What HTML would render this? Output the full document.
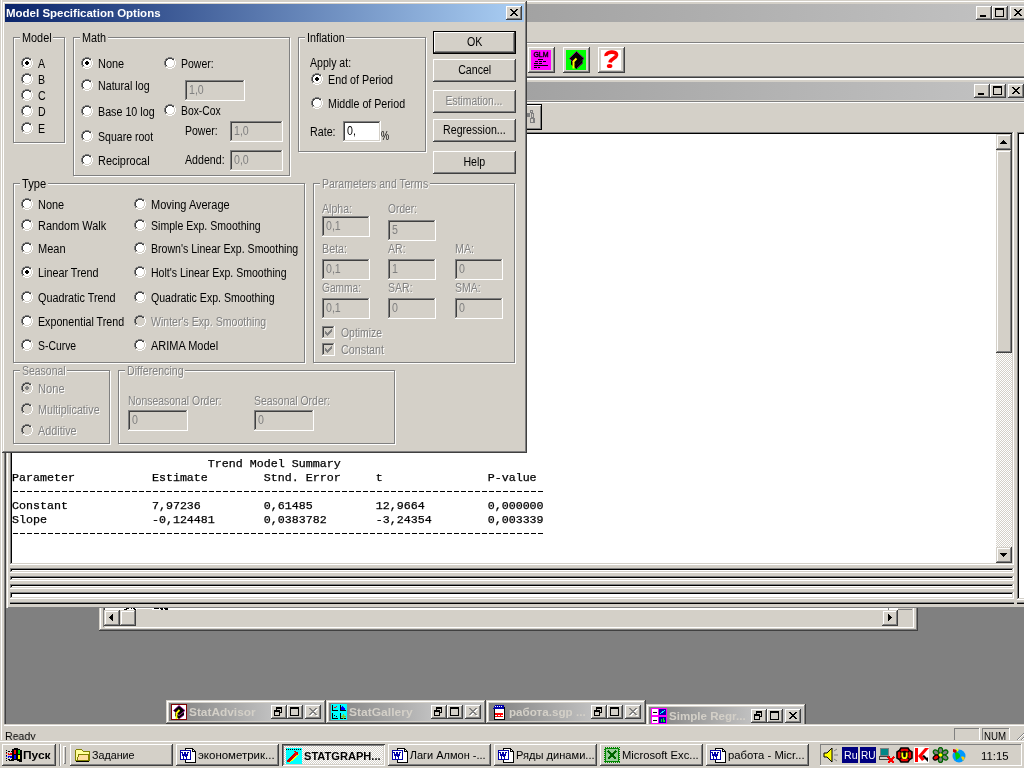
<!DOCTYPE html>
<html><head><meta charset="utf-8"><title>Model Specification Options</title>
<style>
html,body{margin:0;padding:0}
body{width:1024px;height:768px;overflow:hidden;background:#d4d0c8;position:relative;font-family:"Liberation Sans",sans-serif;font-size:12px}
div,span.t,svg.i{position:absolute;box-sizing:border-box}
span.t{white-space:pre;transform-origin:0 50%}
svg.i{shape-rendering:crispEdges;overflow:hidden}
.bl{text-align:center;font-size:12px;white-space:pre}
.m{font-family:"Liberation Mono",monospace;font-size:11.667px;line-height:14px;white-space:pre;color:#000;-webkit-text-stroke:.25px #000}
</style></head><body>
<svg width="0" height="0" style="position:absolute"><defs>
<symbol id="ru"><rect x="4" y="0" width="4" height="1" fill="#808080"/><rect x="2" y="1" width="2" height="1" fill="#808080"/><rect x="4" y="1" width="4" height="1" fill="#404040"/><rect x="8" y="1" width="2" height="1" fill="#808080"/><rect x="1" y="2" width="1" height="1" fill="#808080"/><rect x="2" y="2" width="2" height="1" fill="#404040"/><rect x="4" y="2" width="4" height="1" fill="#fff"/><rect x="8" y="2" width="2" height="1" fill="#404040"/><rect x="10" y="2" width="1" height="1" fill="#fff"/><rect x="1" y="3" width="1" height="1" fill="#808080"/><rect x="2" y="3" width="1" height="1" fill="#404040"/><rect x="3" y="3" width="6" height="1" fill="#fff"/><rect x="9" y="3" width="1" height="1" fill="#d4d0c8"/><rect x="10" y="3" width="1" height="1" fill="#fff"/><rect x="0" y="4" width="1" height="1" fill="#808080"/><rect x="1" y="4" width="1" height="1" fill="#404040"/><rect x="2" y="4" width="8" height="1" fill="#fff"/><rect x="10" y="4" width="1" height="1" fill="#d4d0c8"/><rect x="11" y="4" width="1" height="1" fill="#fff"/><rect x="0" y="5" width="1" height="1" fill="#808080"/><rect x="1" y="5" width="1" height="1" fill="#404040"/><rect x="2" y="5" width="8" height="1" fill="#fff"/><rect x="10" y="5" width="1" height="1" fill="#d4d0c8"/><rect x="11" y="5" width="1" height="1" fill="#fff"/><rect x="0" y="6" width="1" height="1" fill="#808080"/><rect x="1" y="6" width="1" height="1" fill="#404040"/><rect x="2" y="6" width="8" height="1" fill="#fff"/><rect x="10" y="6" width="1" height="1" fill="#d4d0c8"/><rect x="11" y="6" width="1" height="1" fill="#fff"/><rect x="0" y="7" width="1" height="1" fill="#808080"/><rect x="1" y="7" width="1" height="1" fill="#404040"/><rect x="2" y="7" width="8" height="1" fill="#fff"/><rect x="10" y="7" width="1" height="1" fill="#d4d0c8"/><rect x="11" y="7" width="1" height="1" fill="#fff"/><rect x="1" y="8" width="1" height="1" fill="#808080"/><rect x="2" y="8" width="1" height="1" fill="#404040"/><rect x="3" y="8" width="6" height="1" fill="#fff"/><rect x="9" y="8" width="1" height="1" fill="#d4d0c8"/><rect x="10" y="8" width="1" height="1" fill="#fff"/><rect x="1" y="9" width="1" height="1" fill="#808080"/><rect x="2" y="9" width="2" height="1" fill="#d4d0c8"/><rect x="4" y="9" width="4" height="1" fill="#fff"/><rect x="8" y="9" width="2" height="1" fill="#d4d0c8"/><rect x="10" y="9" width="1" height="1" fill="#fff"/><rect x="2" y="10" width="2" height="1" fill="#fff"/><rect x="4" y="10" width="4" height="1" fill="#d4d0c8"/><rect x="8" y="10" width="2" height="1" fill="#fff"/><rect x="4" y="11" width="4" height="1" fill="#fff"/></symbol>
<symbol id="rc"><rect x="4" y="0" width="4" height="1" fill="#808080"/><rect x="2" y="1" width="2" height="1" fill="#808080"/><rect x="4" y="1" width="4" height="1" fill="#404040"/><rect x="8" y="1" width="2" height="1" fill="#808080"/><rect x="1" y="2" width="1" height="1" fill="#808080"/><rect x="2" y="2" width="2" height="1" fill="#404040"/><rect x="4" y="2" width="4" height="1" fill="#fff"/><rect x="8" y="2" width="2" height="1" fill="#404040"/><rect x="10" y="2" width="1" height="1" fill="#fff"/><rect x="1" y="3" width="1" height="1" fill="#808080"/><rect x="2" y="3" width="1" height="1" fill="#404040"/><rect x="3" y="3" width="6" height="1" fill="#fff"/><rect x="9" y="3" width="1" height="1" fill="#d4d0c8"/><rect x="10" y="3" width="1" height="1" fill="#fff"/><rect x="0" y="4" width="1" height="1" fill="#808080"/><rect x="1" y="4" width="1" height="1" fill="#404040"/><rect x="2" y="4" width="3" height="1" fill="#fff"/><rect x="5" y="4" width="2" height="1" fill="#000"/><rect x="7" y="4" width="3" height="1" fill="#fff"/><rect x="10" y="4" width="1" height="1" fill="#d4d0c8"/><rect x="11" y="4" width="1" height="1" fill="#fff"/><rect x="0" y="5" width="1" height="1" fill="#808080"/><rect x="1" y="5" width="1" height="1" fill="#404040"/><rect x="2" y="5" width="2" height="1" fill="#fff"/><rect x="4" y="5" width="4" height="1" fill="#000"/><rect x="8" y="5" width="2" height="1" fill="#fff"/><rect x="10" y="5" width="1" height="1" fill="#d4d0c8"/><rect x="11" y="5" width="1" height="1" fill="#fff"/><rect x="0" y="6" width="1" height="1" fill="#808080"/><rect x="1" y="6" width="1" height="1" fill="#404040"/><rect x="2" y="6" width="2" height="1" fill="#fff"/><rect x="4" y="6" width="4" height="1" fill="#000"/><rect x="8" y="6" width="2" height="1" fill="#fff"/><rect x="10" y="6" width="1" height="1" fill="#d4d0c8"/><rect x="11" y="6" width="1" height="1" fill="#fff"/><rect x="0" y="7" width="1" height="1" fill="#808080"/><rect x="1" y="7" width="1" height="1" fill="#404040"/><rect x="2" y="7" width="3" height="1" fill="#fff"/><rect x="5" y="7" width="2" height="1" fill="#000"/><rect x="7" y="7" width="3" height="1" fill="#fff"/><rect x="10" y="7" width="1" height="1" fill="#d4d0c8"/><rect x="11" y="7" width="1" height="1" fill="#fff"/><rect x="1" y="8" width="1" height="1" fill="#808080"/><rect x="2" y="8" width="1" height="1" fill="#404040"/><rect x="3" y="8" width="6" height="1" fill="#fff"/><rect x="9" y="8" width="1" height="1" fill="#d4d0c8"/><rect x="10" y="8" width="1" height="1" fill="#fff"/><rect x="1" y="9" width="1" height="1" fill="#808080"/><rect x="2" y="9" width="2" height="1" fill="#d4d0c8"/><rect x="4" y="9" width="4" height="1" fill="#fff"/><rect x="8" y="9" width="2" height="1" fill="#d4d0c8"/><rect x="10" y="9" width="1" height="1" fill="#fff"/><rect x="2" y="10" width="2" height="1" fill="#fff"/><rect x="4" y="10" width="4" height="1" fill="#d4d0c8"/><rect x="8" y="10" width="2" height="1" fill="#fff"/><rect x="4" y="11" width="4" height="1" fill="#fff"/></symbol>
<symbol id="rud"><rect x="4" y="0" width="4" height="1" fill="#808080"/><rect x="2" y="1" width="2" height="1" fill="#808080"/><rect x="4" y="1" width="4" height="1" fill="#404040"/><rect x="8" y="1" width="2" height="1" fill="#808080"/><rect x="1" y="2" width="1" height="1" fill="#808080"/><rect x="2" y="2" width="2" height="1" fill="#404040"/><rect x="4" y="2" width="4" height="1" fill="#d4d0c8"/><rect x="8" y="2" width="2" height="1" fill="#404040"/><rect x="10" y="2" width="1" height="1" fill="#fff"/><rect x="1" y="3" width="1" height="1" fill="#808080"/><rect x="2" y="3" width="1" height="1" fill="#404040"/><rect x="3" y="3" width="6" height="1" fill="#d4d0c8"/><rect x="9" y="3" width="1" height="1" fill="#d4d0c8"/><rect x="10" y="3" width="1" height="1" fill="#fff"/><rect x="0" y="4" width="1" height="1" fill="#808080"/><rect x="1" y="4" width="1" height="1" fill="#404040"/><rect x="2" y="4" width="8" height="1" fill="#d4d0c8"/><rect x="10" y="4" width="1" height="1" fill="#d4d0c8"/><rect x="11" y="4" width="1" height="1" fill="#fff"/><rect x="0" y="5" width="1" height="1" fill="#808080"/><rect x="1" y="5" width="1" height="1" fill="#404040"/><rect x="2" y="5" width="8" height="1" fill="#d4d0c8"/><rect x="10" y="5" width="1" height="1" fill="#d4d0c8"/><rect x="11" y="5" width="1" height="1" fill="#fff"/><rect x="0" y="6" width="1" height="1" fill="#808080"/><rect x="1" y="6" width="1" height="1" fill="#404040"/><rect x="2" y="6" width="8" height="1" fill="#d4d0c8"/><rect x="10" y="6" width="1" height="1" fill="#d4d0c8"/><rect x="11" y="6" width="1" height="1" fill="#fff"/><rect x="0" y="7" width="1" height="1" fill="#808080"/><rect x="1" y="7" width="1" height="1" fill="#404040"/><rect x="2" y="7" width="8" height="1" fill="#d4d0c8"/><rect x="10" y="7" width="1" height="1" fill="#d4d0c8"/><rect x="11" y="7" width="1" height="1" fill="#fff"/><rect x="1" y="8" width="1" height="1" fill="#808080"/><rect x="2" y="8" width="1" height="1" fill="#404040"/><rect x="3" y="8" width="6" height="1" fill="#d4d0c8"/><rect x="9" y="8" width="1" height="1" fill="#d4d0c8"/><rect x="10" y="8" width="1" height="1" fill="#fff"/><rect x="1" y="9" width="1" height="1" fill="#808080"/><rect x="2" y="9" width="2" height="1" fill="#d4d0c8"/><rect x="4" y="9" width="4" height="1" fill="#d4d0c8"/><rect x="8" y="9" width="2" height="1" fill="#d4d0c8"/><rect x="10" y="9" width="1" height="1" fill="#fff"/><rect x="2" y="10" width="2" height="1" fill="#fff"/><rect x="4" y="10" width="4" height="1" fill="#d4d0c8"/><rect x="8" y="10" width="2" height="1" fill="#fff"/><rect x="4" y="11" width="4" height="1" fill="#fff"/></symbol>
<symbol id="rcd"><rect x="4" y="0" width="4" height="1" fill="#808080"/><rect x="2" y="1" width="2" height="1" fill="#808080"/><rect x="4" y="1" width="4" height="1" fill="#404040"/><rect x="8" y="1" width="2" height="1" fill="#808080"/><rect x="1" y="2" width="1" height="1" fill="#808080"/><rect x="2" y="2" width="2" height="1" fill="#404040"/><rect x="4" y="2" width="4" height="1" fill="#d4d0c8"/><rect x="8" y="2" width="2" height="1" fill="#404040"/><rect x="10" y="2" width="1" height="1" fill="#fff"/><rect x="1" y="3" width="1" height="1" fill="#808080"/><rect x="2" y="3" width="1" height="1" fill="#404040"/><rect x="3" y="3" width="6" height="1" fill="#d4d0c8"/><rect x="9" y="3" width="1" height="1" fill="#d4d0c8"/><rect x="10" y="3" width="1" height="1" fill="#fff"/><rect x="0" y="4" width="1" height="1" fill="#808080"/><rect x="1" y="4" width="1" height="1" fill="#404040"/><rect x="2" y="4" width="3" height="1" fill="#d4d0c8"/><rect x="5" y="4" width="2" height="1" fill="#808080"/><rect x="7" y="4" width="3" height="1" fill="#d4d0c8"/><rect x="10" y="4" width="1" height="1" fill="#d4d0c8"/><rect x="11" y="4" width="1" height="1" fill="#fff"/><rect x="0" y="5" width="1" height="1" fill="#808080"/><rect x="1" y="5" width="1" height="1" fill="#404040"/><rect x="2" y="5" width="2" height="1" fill="#d4d0c8"/><rect x="4" y="5" width="4" height="1" fill="#808080"/><rect x="8" y="5" width="2" height="1" fill="#d4d0c8"/><rect x="10" y="5" width="1" height="1" fill="#d4d0c8"/><rect x="11" y="5" width="1" height="1" fill="#fff"/><rect x="0" y="6" width="1" height="1" fill="#808080"/><rect x="1" y="6" width="1" height="1" fill="#404040"/><rect x="2" y="6" width="2" height="1" fill="#d4d0c8"/><rect x="4" y="6" width="4" height="1" fill="#808080"/><rect x="8" y="6" width="2" height="1" fill="#d4d0c8"/><rect x="10" y="6" width="1" height="1" fill="#d4d0c8"/><rect x="11" y="6" width="1" height="1" fill="#fff"/><rect x="0" y="7" width="1" height="1" fill="#808080"/><rect x="1" y="7" width="1" height="1" fill="#404040"/><rect x="2" y="7" width="3" height="1" fill="#d4d0c8"/><rect x="5" y="7" width="2" height="1" fill="#808080"/><rect x="7" y="7" width="3" height="1" fill="#d4d0c8"/><rect x="10" y="7" width="1" height="1" fill="#d4d0c8"/><rect x="11" y="7" width="1" height="1" fill="#fff"/><rect x="1" y="8" width="1" height="1" fill="#808080"/><rect x="2" y="8" width="1" height="1" fill="#404040"/><rect x="3" y="8" width="6" height="1" fill="#d4d0c8"/><rect x="9" y="8" width="1" height="1" fill="#d4d0c8"/><rect x="10" y="8" width="1" height="1" fill="#fff"/><rect x="1" y="9" width="1" height="1" fill="#808080"/><rect x="2" y="9" width="2" height="1" fill="#d4d0c8"/><rect x="4" y="9" width="4" height="1" fill="#d4d0c8"/><rect x="8" y="9" width="2" height="1" fill="#d4d0c8"/><rect x="10" y="9" width="1" height="1" fill="#fff"/><rect x="2" y="10" width="2" height="1" fill="#fff"/><rect x="4" y="10" width="4" height="1" fill="#d4d0c8"/><rect x="8" y="10" width="2" height="1" fill="#fff"/><rect x="4" y="11" width="4" height="1" fill="#fff"/></symbol>
<symbol id="ckd"><rect x="0" y="0" width="12" height="1" fill="#808080"/><rect x="12" y="0" width="1" height="1" fill="#fff"/><rect x="0" y="1" width="1" height="1" fill="#808080"/><rect x="1" y="1" width="10" height="1" fill="#404040"/><rect x="11" y="1" width="1" height="1" fill="#d4d0c8"/><rect x="12" y="1" width="1" height="1" fill="#fff"/><rect x="0" y="2" width="1" height="1" fill="#808080"/><rect x="1" y="2" width="1" height="1" fill="#404040"/><rect x="2" y="2" width="9" height="1" fill="#d4d0c8"/><rect x="11" y="2" width="1" height="1" fill="#d4d0c8"/><rect x="12" y="2" width="1" height="1" fill="#fff"/><rect x="0" y="3" width="1" height="1" fill="#808080"/><rect x="1" y="3" width="1" height="1" fill="#404040"/><rect x="2" y="3" width="7" height="1" fill="#d4d0c8"/><rect x="9" y="3" width="1" height="1" fill="#808080"/><rect x="10" y="3" width="1" height="1" fill="#d4d0c8"/><rect x="11" y="3" width="1" height="1" fill="#d4d0c8"/><rect x="12" y="3" width="1" height="1" fill="#fff"/><rect x="0" y="4" width="1" height="1" fill="#808080"/><rect x="1" y="4" width="1" height="1" fill="#404040"/><rect x="2" y="4" width="6" height="1" fill="#d4d0c8"/><rect x="8" y="4" width="2" height="1" fill="#808080"/><rect x="10" y="4" width="1" height="1" fill="#d4d0c8"/><rect x="11" y="4" width="1" height="1" fill="#d4d0c8"/><rect x="12" y="4" width="1" height="1" fill="#fff"/><rect x="0" y="5" width="1" height="1" fill="#808080"/><rect x="1" y="5" width="1" height="1" fill="#404040"/><rect x="2" y="5" width="1" height="1" fill="#d4d0c8"/><rect x="3" y="5" width="1" height="1" fill="#808080"/><rect x="4" y="5" width="3" height="1" fill="#d4d0c8"/><rect x="7" y="5" width="3" height="1" fill="#808080"/><rect x="10" y="5" width="1" height="1" fill="#d4d0c8"/><rect x="11" y="5" width="1" height="1" fill="#d4d0c8"/><rect x="12" y="5" width="1" height="1" fill="#fff"/><rect x="0" y="6" width="1" height="1" fill="#808080"/><rect x="1" y="6" width="1" height="1" fill="#404040"/><rect x="2" y="6" width="1" height="1" fill="#d4d0c8"/><rect x="3" y="6" width="2" height="1" fill="#808080"/><rect x="5" y="6" width="1" height="1" fill="#d4d0c8"/><rect x="6" y="6" width="3" height="1" fill="#808080"/><rect x="9" y="6" width="2" height="1" fill="#d4d0c8"/><rect x="11" y="6" width="1" height="1" fill="#d4d0c8"/><rect x="12" y="6" width="1" height="1" fill="#fff"/><rect x="0" y="7" width="1" height="1" fill="#808080"/><rect x="1" y="7" width="1" height="1" fill="#404040"/><rect x="2" y="7" width="1" height="1" fill="#d4d0c8"/><rect x="3" y="7" width="5" height="1" fill="#808080"/><rect x="8" y="7" width="3" height="1" fill="#d4d0c8"/><rect x="11" y="7" width="1" height="1" fill="#d4d0c8"/><rect x="12" y="7" width="1" height="1" fill="#fff"/><rect x="0" y="8" width="1" height="1" fill="#808080"/><rect x="1" y="8" width="1" height="1" fill="#404040"/><rect x="2" y="8" width="2" height="1" fill="#d4d0c8"/><rect x="4" y="8" width="3" height="1" fill="#808080"/><rect x="7" y="8" width="4" height="1" fill="#d4d0c8"/><rect x="11" y="8" width="1" height="1" fill="#d4d0c8"/><rect x="12" y="8" width="1" height="1" fill="#fff"/><rect x="0" y="9" width="1" height="1" fill="#808080"/><rect x="1" y="9" width="1" height="1" fill="#404040"/><rect x="2" y="9" width="3" height="1" fill="#d4d0c8"/><rect x="5" y="9" width="1" height="1" fill="#808080"/><rect x="6" y="9" width="5" height="1" fill="#d4d0c8"/><rect x="11" y="9" width="1" height="1" fill="#d4d0c8"/><rect x="12" y="9" width="1" height="1" fill="#fff"/><rect x="0" y="10" width="1" height="1" fill="#808080"/><rect x="1" y="10" width="1" height="1" fill="#404040"/><rect x="2" y="10" width="9" height="1" fill="#d4d0c8"/><rect x="11" y="10" width="1" height="1" fill="#d4d0c8"/><rect x="12" y="10" width="1" height="1" fill="#fff"/><rect x="0" y="11" width="1" height="1" fill="#808080"/><rect x="1" y="11" width="11" height="1" fill="#d4d0c8"/><rect x="12" y="11" width="1" height="1" fill="#fff"/><rect x="0" y="12" width="13" height="1" fill="#fff"/></symbol>
<symbol id="gmin"><rect x="0" y="6" width="6" height="1" fill="#000"/><rect x="0" y="7" width="6" height="1" fill="#000"/></symbol>
<symbol id="gmind"><rect x="0" y="6" width="6" height="1" fill="#808080"/><rect x="0" y="7" width="6" height="1" fill="#808080"/></symbol>
<symbol id="gminw"><rect x="0" y="6" width="6" height="1" fill="#fff"/><rect x="0" y="7" width="6" height="1" fill="#fff"/></symbol>
<symbol id="gmax"><rect x="0" y="0" width="9" height="1" fill="#000"/><rect x="0" y="1" width="9" height="1" fill="#000"/><rect x="0" y="2" width="1" height="1" fill="#000"/><rect x="8" y="2" width="1" height="1" fill="#000"/><rect x="0" y="3" width="1" height="1" fill="#000"/><rect x="8" y="3" width="1" height="1" fill="#000"/><rect x="0" y="4" width="1" height="1" fill="#000"/><rect x="8" y="4" width="1" height="1" fill="#000"/><rect x="0" y="5" width="1" height="1" fill="#000"/><rect x="8" y="5" width="1" height="1" fill="#000"/><rect x="0" y="6" width="1" height="1" fill="#000"/><rect x="8" y="6" width="1" height="1" fill="#000"/><rect x="0" y="7" width="1" height="1" fill="#000"/><rect x="8" y="7" width="1" height="1" fill="#000"/><rect x="0" y="8" width="9" height="1" fill="#000"/></symbol>
<symbol id="gmaxd"><rect x="0" y="0" width="9" height="1" fill="#808080"/><rect x="0" y="1" width="9" height="1" fill="#808080"/><rect x="0" y="2" width="1" height="1" fill="#808080"/><rect x="8" y="2" width="1" height="1" fill="#808080"/><rect x="0" y="3" width="1" height="1" fill="#808080"/><rect x="8" y="3" width="1" height="1" fill="#808080"/><rect x="0" y="4" width="1" height="1" fill="#808080"/><rect x="8" y="4" width="1" height="1" fill="#808080"/><rect x="0" y="5" width="1" height="1" fill="#808080"/><rect x="8" y="5" width="1" height="1" fill="#808080"/><rect x="0" y="6" width="1" height="1" fill="#808080"/><rect x="8" y="6" width="1" height="1" fill="#808080"/><rect x="0" y="7" width="1" height="1" fill="#808080"/><rect x="8" y="7" width="1" height="1" fill="#808080"/><rect x="0" y="8" width="9" height="1" fill="#808080"/></symbol>
<symbol id="gmaxw"><rect x="0" y="0" width="9" height="1" fill="#fff"/><rect x="0" y="1" width="9" height="1" fill="#fff"/><rect x="0" y="2" width="1" height="1" fill="#fff"/><rect x="8" y="2" width="1" height="1" fill="#fff"/><rect x="0" y="3" width="1" height="1" fill="#fff"/><rect x="8" y="3" width="1" height="1" fill="#fff"/><rect x="0" y="4" width="1" height="1" fill="#fff"/><rect x="8" y="4" width="1" height="1" fill="#fff"/><rect x="0" y="5" width="1" height="1" fill="#fff"/><rect x="8" y="5" width="1" height="1" fill="#fff"/><rect x="0" y="6" width="1" height="1" fill="#fff"/><rect x="8" y="6" width="1" height="1" fill="#fff"/><rect x="0" y="7" width="1" height="1" fill="#fff"/><rect x="8" y="7" width="1" height="1" fill="#fff"/><rect x="0" y="8" width="9" height="1" fill="#fff"/></symbol>
<symbol id="gx"><rect x="0" y="0" width="2" height="1" fill="#000"/><rect x="6" y="0" width="2" height="1" fill="#000"/><rect x="1" y="1" width="2" height="1" fill="#000"/><rect x="5" y="1" width="2" height="1" fill="#000"/><rect x="2" y="2" width="4" height="1" fill="#000"/><rect x="3" y="3" width="2" height="1" fill="#000"/><rect x="2" y="4" width="4" height="1" fill="#000"/><rect x="1" y="5" width="2" height="1" fill="#000"/><rect x="5" y="5" width="2" height="1" fill="#000"/><rect x="0" y="6" width="2" height="1" fill="#000"/><rect x="6" y="6" width="2" height="1" fill="#000"/></symbol>
<symbol id="gxd"><rect x="0" y="0" width="2" height="1" fill="#808080"/><rect x="6" y="0" width="2" height="1" fill="#808080"/><rect x="1" y="1" width="2" height="1" fill="#808080"/><rect x="5" y="1" width="2" height="1" fill="#808080"/><rect x="2" y="2" width="4" height="1" fill="#808080"/><rect x="3" y="3" width="2" height="1" fill="#808080"/><rect x="2" y="4" width="4" height="1" fill="#808080"/><rect x="1" y="5" width="2" height="1" fill="#808080"/><rect x="5" y="5" width="2" height="1" fill="#808080"/><rect x="0" y="6" width="2" height="1" fill="#808080"/><rect x="6" y="6" width="2" height="1" fill="#808080"/></symbol>
<symbol id="gxw"><rect x="0" y="0" width="2" height="1" fill="#fff"/><rect x="6" y="0" width="2" height="1" fill="#fff"/><rect x="1" y="1" width="2" height="1" fill="#fff"/><rect x="5" y="1" width="2" height="1" fill="#fff"/><rect x="2" y="2" width="4" height="1" fill="#fff"/><rect x="3" y="3" width="2" height="1" fill="#fff"/><rect x="2" y="4" width="4" height="1" fill="#fff"/><rect x="1" y="5" width="2" height="1" fill="#fff"/><rect x="5" y="5" width="2" height="1" fill="#fff"/><rect x="0" y="6" width="2" height="1" fill="#fff"/><rect x="6" y="6" width="2" height="1" fill="#fff"/></symbol>
<symbol id="gres"><rect x="2" y="0" width="6" height="1" fill="#000"/><rect x="2" y="1" width="6" height="1" fill="#000"/><rect x="2" y="2" width="1" height="1" fill="#000"/><rect x="7" y="2" width="1" height="1" fill="#000"/><rect x="0" y="3" width="6" height="1" fill="#000"/><rect x="7" y="3" width="1" height="1" fill="#000"/><rect x="0" y="4" width="6" height="1" fill="#000"/><rect x="7" y="4" width="1" height="1" fill="#000"/><rect x="0" y="5" width="1" height="1" fill="#000"/><rect x="5" y="5" width="3" height="1" fill="#000"/><rect x="0" y="6" width="1" height="1" fill="#000"/><rect x="5" y="6" width="1" height="1" fill="#000"/><rect x="0" y="7" width="1" height="1" fill="#000"/><rect x="5" y="7" width="1" height="1" fill="#000"/><rect x="0" y="8" width="6" height="1" fill="#000"/></symbol>
<symbol id="gresd"><rect x="2" y="0" width="6" height="1" fill="#808080"/><rect x="2" y="1" width="6" height="1" fill="#808080"/><rect x="2" y="2" width="1" height="1" fill="#808080"/><rect x="7" y="2" width="1" height="1" fill="#808080"/><rect x="0" y="3" width="6" height="1" fill="#808080"/><rect x="7" y="3" width="1" height="1" fill="#808080"/><rect x="0" y="4" width="6" height="1" fill="#808080"/><rect x="7" y="4" width="1" height="1" fill="#808080"/><rect x="0" y="5" width="1" height="1" fill="#808080"/><rect x="5" y="5" width="3" height="1" fill="#808080"/><rect x="0" y="6" width="1" height="1" fill="#808080"/><rect x="5" y="6" width="1" height="1" fill="#808080"/><rect x="0" y="7" width="1" height="1" fill="#808080"/><rect x="5" y="7" width="1" height="1" fill="#808080"/><rect x="0" y="8" width="6" height="1" fill="#808080"/></symbol>
<symbol id="gresw"><rect x="2" y="0" width="6" height="1" fill="#fff"/><rect x="2" y="1" width="6" height="1" fill="#fff"/><rect x="2" y="2" width="1" height="1" fill="#fff"/><rect x="7" y="2" width="1" height="1" fill="#fff"/><rect x="0" y="3" width="6" height="1" fill="#fff"/><rect x="7" y="3" width="1" height="1" fill="#fff"/><rect x="0" y="4" width="6" height="1" fill="#fff"/><rect x="7" y="4" width="1" height="1" fill="#fff"/><rect x="0" y="5" width="1" height="1" fill="#fff"/><rect x="5" y="5" width="3" height="1" fill="#fff"/><rect x="0" y="6" width="1" height="1" fill="#fff"/><rect x="5" y="6" width="1" height="1" fill="#fff"/><rect x="0" y="7" width="1" height="1" fill="#fff"/><rect x="5" y="7" width="1" height="1" fill="#fff"/><rect x="0" y="8" width="6" height="1" fill="#fff"/></symbol>
<symbol id="aup"><rect x="3" y="0" width="1" height="1" fill="#000"/><rect x="2" y="1" width="3" height="1" fill="#000"/><rect x="1" y="2" width="5" height="1" fill="#000"/><rect x="0" y="3" width="7" height="1" fill="#000"/></symbol>
<symbol id="adn"><rect x="0" y="0" width="7" height="1" fill="#000"/><rect x="1" y="1" width="5" height="1" fill="#000"/><rect x="2" y="2" width="3" height="1" fill="#000"/><rect x="3" y="3" width="1" height="1" fill="#000"/></symbol>
<symbol id="alt"><rect x="3" y="0" width="1" height="1" fill="#000"/><rect x="2" y="1" width="2" height="1" fill="#000"/><rect x="1" y="2" width="3" height="1" fill="#000"/><rect x="0" y="3" width="4" height="1" fill="#000"/><rect x="1" y="4" width="3" height="1" fill="#000"/><rect x="2" y="5" width="2" height="1" fill="#000"/><rect x="3" y="6" width="1" height="1" fill="#000"/></symbol>
<symbol id="art"><rect x="0" y="0" width="1" height="1" fill="#000"/><rect x="0" y="1" width="2" height="1" fill="#000"/><rect x="0" y="2" width="3" height="1" fill="#000"/><rect x="0" y="3" width="4" height="1" fill="#000"/><rect x="0" y="4" width="3" height="1" fill="#000"/><rect x="0" y="5" width="2" height="1" fill="#000"/><rect x="0" y="6" width="1" height="1" fill="#000"/></symbol>
</defs></svg>
<div id="w" style="left:0;top:0;width:1024px;height:768px;overflow:hidden;will-change:transform">
<div style="left:1px;top:0px;width:1px;height:741px;background:#fff"></div>
<div style="left:1px;top:1px;width:1023px;height:1px;background:#fff"></div>
<div style="left:4px;top:4px;width:1024px;height:18px;background:linear-gradient(90deg,#808080,#c0c0c0 95%)"></div>
<div style="left:976px;top:6px;width:16px;height:14px;background:#d4d0c8;box-shadow:inset -1px -1px #404040,inset 1px 1px #fff,inset -2px -2px #808080,inset 2px 2px #d4d0c8;"></div>
<svg class="i" style="left:980px;top:9px" width="6" height="8"><use href="#gmin"/></svg>
<div style="left:992px;top:6px;width:16px;height:14px;background:#d4d0c8;box-shadow:inset -1px -1px #404040,inset 1px 1px #fff,inset -2px -2px #808080,inset 2px 2px #d4d0c8;"></div>
<svg class="i" style="left:995px;top:8px" width="9" height="9"><use href="#gmax"/></svg>
<div style="left:1010px;top:6px;width:16px;height:14px;background:#d4d0c8;box-shadow:inset -1px -1px #404040,inset 1px 1px #fff,inset -2px -2px #808080,inset 2px 2px #d4d0c8;"></div>
<svg class="i" style="left:1014px;top:9px" width="8" height="7"><use href="#gx"/></svg>
<div style="left:4px;top:42px;width:1020px;height:1px;background:#808080"></div>
<div style="left:4px;top:43px;width:1020px;height:1px;background:#fff"></div>
<div style="left:528px;top:47px;width:27px;height:26px;box-shadow:inset -1px -1px #404040,inset 1px 1px #fff,inset -2px -2px #808080;"></div>
<div style="left:563px;top:47px;width:27px;height:26px;box-shadow:inset -1px -1px #404040,inset 1px 1px #fff,inset -2px -2px #808080;"></div>
<div style="left:598px;top:47px;width:27px;height:26px;box-shadow:inset -1px -1px #404040,inset 1px 1px #fff,inset -2px -2px #808080;"></div>
<svg class="i" style="left:531px;top:50px" width="20" height="20"><rect width="20" height="20" fill="#f0f"/><text x="10" y="7" font-family="Liberation Sans" font-size="7" text-anchor="middle" fill="#000" stroke="#000" stroke-width=".35" style="shape-rendering:auto">GLM</text><path d="M7 9.5h5M4 11.5h3M8 11.5h3M12 11.5h3M3 13.5h4M8 13.5h3M3 15.5h14M3 17.5h3M7 17.5h2" stroke="#000" stroke-width="1"/></svg>
<svg class="i" style="left:566px;top:50px;shape-rendering:auto" width="20" height="20"><rect width="20" height="20" fill="#0f0"/><path d="M10.5 1.5L18 8.5 10.5 15.5 3.5 8.5Z" fill="#000" stroke="#800080" stroke-width="1"/><path d="M5 10.5v4l5.5 4.5 6-5.5v-4l-6 5.5z" fill="#000"/><path d="M11 18l6-5.5" stroke="#800080"/><path d="M10.5 8.5l-3 3v7" stroke="#ff0" stroke-width="2" fill="none"/></svg>
<svg class="i" style="left:601px;top:50px;shape-rendering:auto" width="20" height="20"><rect width="20" height="20" fill="#fff"/><path d="M5 6C4.500 1.500 16 0.500 15.500 5.200C15 8.500 9.500 8.500 9 12.400" stroke="#f00" stroke-width="3.600" fill="none"/><ellipse cx="8.600" cy="16" rx="2.800" ry="2.100" fill="#f00"/></svg>
<div style="left:4px;top:76px;width:1020px;height:1px;background:#808080"></div>
<div style="left:4px;top:77px;width:1020px;height:1px;background:#404040"></div>
<div style="left:4px;top:78px;width:1024px;height:647px;background:#808080"></div>
<div style="left:4px;top:78px;width:1px;height:646px;background:#808080"></div>
<div style="left:5px;top:78px;width:1px;height:646px;background:#404040"></div>
<div style="left:4px;top:724px;width:1020px;height:1px;background:#d4d0c8"></div>
<div style="left:4px;top:725px;width:1020px;height:1px;background:#fff"></div>
<div style="left:6px;top:78px;width:1024px;height:530px;background:#d4d0c8;box-shadow:inset 1px 1px #fff,inset 2px 2px #fff,inset 0 -1px #808080;"></div>
<div style="left:6px;top:78px;width:1px;height:530px;background:#d4d0c8"></div>
<div style="left:10px;top:82px;width:1016px;height:18px;background:linear-gradient(90deg,#808080,#c0c0c0 95%)"></div>
<div style="left:974px;top:84px;width:16px;height:14px;background:#d4d0c8;box-shadow:inset -1px -1px #404040,inset 1px 1px #fff,inset -2px -2px #808080,inset 2px 2px #d4d0c8;"></div>
<svg class="i" style="left:978px;top:87px" width="6" height="8"><use href="#gmin"/></svg>
<div style="left:990px;top:84px;width:16px;height:14px;background:#d4d0c8;box-shadow:inset -1px -1px #404040,inset 1px 1px #fff,inset -2px -2px #808080,inset 2px 2px #d4d0c8;"></div>
<svg class="i" style="left:993px;top:86px" width="9" height="9"><use href="#gmax"/></svg>
<div style="left:1008px;top:84px;width:16px;height:14px;background:#d4d0c8;box-shadow:inset -1px -1px #404040,inset 1px 1px #fff,inset -2px -2px #808080,inset 2px 2px #d4d0c8;"></div>
<svg class="i" style="left:1012px;top:87px" width="8" height="7"><use href="#gx"/></svg>
<div style="left:10px;top:102px;width:1014px;height:1px;background:#fff"></div>
<div style="left:10px;top:101px;width:1014px;height:1px;background:#808080"></div>
<div style="left:516px;top:104px;width:26px;height:26px;background:#000"></div>
<div style="left:517px;top:105px;width:24px;height:24px;background:#d4d0c8;box-shadow:inset 1px 1px #fff,inset -1px -1px #808080;"></div>
<svg class="i" style="left:527px;top:110px" width="9" height="13"><path d="M3 0h3v3h-3zM0 3h3v4h-3zM4 3h3v5h-3zM3 8h5v5h-5z" fill="#808080"/><path d="M4 1h1v1h-1zM5 4h1v3h-1zM4 9h2v3h-2z" fill="#d4d0c8"/></svg>
<div style="left:10px;top:132px;width:1004px;height:433px;background:#fff;box-shadow:inset -1px -1px #fff,inset 1px 1px #808080,inset -2px -2px #d4d0c8,inset 2px 2px #000;"></div>
<div style="left:996px;top:134px;width:16px;height:429px;background:#fff;background-image:conic-gradient(#d4d0c8 25%,#fff 0 50%,#d4d0c8 0 75%,#fff 0);background-size:2px 2px;"></div>
<div style="left:996px;top:134px;width:16px;height:16px;background:#d4d0c8;box-shadow:inset -1px -1px #404040,inset 1px 1px #d4d0c8,inset -2px -2px #808080,inset 2px 2px #fff;"></div>
<svg class="i" style="left:1000px;top:140px" width="7" height="4"><use href="#aup"/></svg>
<div style="left:996px;top:150px;width:16px;height:203px;background:#d4d0c8;box-shadow:inset -1px -1px #404040,inset 1px 1px #d4d0c8,inset -2px -2px #808080,inset 2px 2px #fff;"></div>
<div style="left:996px;top:547px;width:16px;height:16px;background:#d4d0c8;box-shadow:inset -1px -1px #404040,inset 1px 1px #d4d0c8,inset -2px -2px #808080,inset 2px 2px #fff;"></div>
<svg class="i" style="left:1000px;top:553px" width="7" height="4"><use href="#adn"/></svg>
<div style="left:10px;top:568px;width:1004px;height:5px;background:#fff;box-shadow:inset -1px -1px #fff,inset 1px 1px #808080,inset -2px -2px #d4d0c8,inset 2px 2px #000;"></div>
<div style="left:10px;top:576px;width:1004px;height:5px;background:#fff;box-shadow:inset -1px -1px #fff,inset 1px 1px #808080,inset -2px -2px #d4d0c8,inset 2px 2px #000;"></div>
<div style="left:10px;top:584px;width:1004px;height:5px;background:#fff;box-shadow:inset -1px -1px #fff,inset 1px 1px #808080,inset -2px -2px #d4d0c8,inset 2px 2px #000;"></div>
<div style="left:10px;top:592px;width:1004px;height:7px;background:#fff;box-shadow:inset -1px -1px #fff,inset 1px 1px #808080,inset -2px -2px #d4d0c8,inset 2px 2px #000;"></div>
<div style="left:10px;top:602px;width:1004px;height:1px;background:#808080"></div>
<div style="left:10px;top:603px;width:1004px;height:1px;background:#000"></div>
<div style="left:1017px;top:132px;width:10px;height:468px;background:#fff;box-shadow:inset -1px -1px #fff,inset 1px 1px #808080,inset -2px -2px #d4d0c8,inset 2px 2px #000;"></div>
<div style="left:1017px;top:602px;width:10px;height:1px;background:#808080"></div>
<div style="left:1017px;top:603px;width:10px;height:1px;background:#000"></div>
<div style="left:13px;top:491px;width:530px;height:1px;background:repeating-linear-gradient(90deg,#000 0 5px,transparent 5px 7px)"></div>
<div style="left:13px;top:533px;width:530px;height:1px;background:repeating-linear-gradient(90deg,#000 0 5px,transparent 5px 7px)"></div>
<div class="m" style="left:12px;top:457px">                            Trend Model Summary
Parameter           Estimate        Stnd. Error     t               P-value

Constant            7,97236         0,61485         12,9664         0,000000
Slope               -0,124481       0,0383782       -3,24354        0,003339
</div>
<div style="left:99px;top:608px;width:819px;height:23px;background:#d4d0c8;box-shadow:inset -1px -1px #404040,inset 1px 0 #d4d0c8,inset -2px -2px #808080,inset 2px 0 #fff;"></div>
<div style="left:103px;top:608px;width:1px;height:19px;background:#808080"></div>
<div style="left:104px;top:608px;width:1px;height:18px;background:#404040"></div>
<div style="left:105px;top:627px;width:809px;height:1px;background:#fff"></div>
<div style="left:913px;top:608px;width:1px;height:20px;background:#fff"></div>
<div style="left:105px;top:608px;width:793px;height:2px;background:#fff"></div>
<div style="left:126px;top:608px;width:3px;height:1px;background:#000"></div>
<div style="left:124px;top:609px;width:3px;height:1px;background:#000"></div>
<div style="left:131px;top:608px;width:1px;height:1px;background:#000"></div>
<div style="left:133px;top:608px;width:2px;height:1px;background:#000"></div>
<div style="left:134px;top:609px;width:2px;height:1px;background:#000"></div>
<div style="left:154px;top:608px;width:5px;height:1px;background:#000"></div>
<div style="left:160px;top:608px;width:3px;height:1px;background:#000"></div>
<div style="left:161px;top:609px;width:2px;height:1px;background:#000"></div>
<div style="left:164px;top:608px;width:4px;height:1px;background:#000"></div>
<div style="left:165px;top:609px;width:3px;height:1px;background:#000"></div>
<div style="left:137px;top:609px;width:15px;height:1px;background:#d4d0c8"></div>
<div style="left:888px;top:608px;width:1px;height:2px;background:#808080"></div>
<div style="left:898px;top:609px;width:14px;height:1px;background:#808080"></div>
<div style="left:104px;top:610px;width:16px;height:16px;background:#d4d0c8;box-shadow:inset -1px -1px #404040,inset 1px 1px #d4d0c8,inset -2px -2px #808080,inset 2px 2px #fff;"></div>
<svg class="i" style="left:109px;top:614px" width="4" height="7"><use href="#alt"/></svg>
<div style="left:120px;top:610px;width:16px;height:16px;background:#d4d0c8;box-shadow:inset -1px -1px #404040,inset 1px 1px #d4d0c8,inset -2px -2px #808080,inset 2px 2px #fff;"></div>
<div style="left:882px;top:610px;width:16px;height:16px;background:#d4d0c8;box-shadow:inset -1px -1px #404040,inset 1px 1px #d4d0c8,inset -2px -2px #808080,inset 2px 2px #fff;"></div>
<svg class="i" style="left:888px;top:614px" width="4" height="7"><use href="#art"/></svg>
<div style="left:166px;top:700px;width:160px;height:24px;background:#d4d0c8;box-shadow:inset -1px -1px #404040,inset 1px 1px #d4d0c8,inset -2px -2px #808080,inset 2px 2px #fff;"></div>
<div style="left:169px;top:703px;width:154px;height:18px;background:linear-gradient(90deg,#808080,#c0c0c0 66%)"></div>
<span class="t" style="left:189px;top:706px;font-size:11px;line-height:13px;color:#d4d0c8;font-weight:bold;transform:scaleX(1.079);">StatAdvisor</span>
<div style="left:271px;top:705px;width:16px;height:14px;background:#d4d0c8;box-shadow:inset -1px -1px #404040,inset 1px 1px #fff,inset -2px -2px #808080,inset 2px 2px #d4d0c8;"></div>
<svg class="i" style="left:274px;top:707px" width="8" height="9"><use href="#gres"/></svg>
<div style="left:287px;top:705px;width:16px;height:14px;background:#d4d0c8;box-shadow:inset -1px -1px #404040,inset 1px 1px #fff,inset -2px -2px #808080,inset 2px 2px #d4d0c8;"></div>
<svg class="i" style="left:290px;top:707px" width="9" height="9"><use href="#gmax"/></svg>
<div style="left:305px;top:705px;width:16px;height:14px;background:#d4d0c8;box-shadow:inset -1px -1px #404040,inset 1px 1px #fff,inset -2px -2px #808080,inset 2px 2px #d4d0c8;"></div>
<svg class="i" style="left:310px;top:709px" width="8" height="7"><use href="#gxw"/></svg>
<svg class="i" style="left:309px;top:708px" width="8" height="7"><use href="#gxd"/></svg>
<svg class="i" style="left:171px;top:704px" width="16" height="16"><rect x="0.500" y="0.500" width="15" height="15" fill="#fff" stroke="#800000" stroke-width="1" style="shape-rendering:crispEdges"/><g style="shape-rendering:auto"><path d="M8 1.500L14 6.500 8 11.500 2.500 6.500Z" fill="#000" stroke="#a000a0" stroke-width=".8"/><path d="M4 8.500v3.500l4 3 5-4v-3l-5 4z" fill="#000"/><path d="M8.500 14.500l4.500-3.500" stroke="#a000a0" stroke-width=".8"/><path d="M8.500 6l-3 3v6" stroke="#ff0" stroke-width="1.800" fill="none"/></g></svg>
<div style="left:326px;top:700px;width:160px;height:24px;background:#d4d0c8;box-shadow:inset -1px -1px #404040,inset 1px 1px #d4d0c8,inset -2px -2px #808080,inset 2px 2px #fff;"></div>
<div style="left:329px;top:703px;width:154px;height:18px;background:linear-gradient(90deg,#808080,#c0c0c0 66%)"></div>
<span class="t" style="left:349px;top:706px;font-size:11px;line-height:13px;color:#d4d0c8;font-weight:bold;transform:scaleX(1.095);">StatGallery</span>
<div style="left:431px;top:705px;width:16px;height:14px;background:#d4d0c8;box-shadow:inset -1px -1px #404040,inset 1px 1px #fff,inset -2px -2px #808080,inset 2px 2px #d4d0c8;"></div>
<svg class="i" style="left:434px;top:707px" width="8" height="9"><use href="#gres"/></svg>
<div style="left:447px;top:705px;width:16px;height:14px;background:#d4d0c8;box-shadow:inset -1px -1px #404040,inset 1px 1px #fff,inset -2px -2px #808080,inset 2px 2px #d4d0c8;"></div>
<svg class="i" style="left:450px;top:707px" width="9" height="9"><use href="#gmax"/></svg>
<div style="left:465px;top:705px;width:16px;height:14px;background:#d4d0c8;box-shadow:inset -1px -1px #404040,inset 1px 1px #fff,inset -2px -2px #808080,inset 2px 2px #d4d0c8;"></div>
<svg class="i" style="left:470px;top:709px" width="8" height="7"><use href="#gxw"/></svg>
<svg class="i" style="left:469px;top:708px" width="8" height="7"><use href="#gxd"/></svg>
<svg class="i" style="left:331px;top:704px" width="16" height="16"><rect width="16" height="16" fill="#0ff"/><path d="M1 1h1v5h5v1h-6zM9 1h1v5h5v1h-6zM1 9h1v5h5v1h-6zM9 9h1v5h5v1h-6z" fill="#000"/><path d="M3 3h2v-1h1v1h-1v1h-2z" fill="#f00"/><path d="M10 6v-2l1-2h1l1 2 1 1v1z" fill="#00f"/><path d="M3 11h1v1h-1zM5 12h1v1h-1z" fill="#000"/><path d="M11 11h3v3h-3z" fill="#9c6"/><path d="M12 10h1v5h-1zM10 12h5v1h-5z" fill="#6c3"/></svg>
<div style="left:486px;top:700px;width:160px;height:24px;background:#d4d0c8;box-shadow:inset -1px -1px #404040,inset 1px 1px #d4d0c8,inset -2px -2px #808080,inset 2px 2px #fff;"></div>
<div style="left:489px;top:703px;width:154px;height:18px;background:linear-gradient(90deg,#808080,#c0c0c0 66%)"></div>
<span class="t" style="left:509px;top:706px;font-size:11px;line-height:13px;color:#d4d0c8;font-weight:bold;transform:scaleX(1.058);">работа.sgp ...</span>
<div style="left:591px;top:705px;width:16px;height:14px;background:#d4d0c8;box-shadow:inset -1px -1px #404040,inset 1px 1px #fff,inset -2px -2px #808080,inset 2px 2px #d4d0c8;"></div>
<svg class="i" style="left:594px;top:707px" width="8" height="9"><use href="#gres"/></svg>
<div style="left:607px;top:705px;width:16px;height:14px;background:#d4d0c8;box-shadow:inset -1px -1px #404040,inset 1px 1px #fff,inset -2px -2px #808080,inset 2px 2px #d4d0c8;"></div>
<svg class="i" style="left:610px;top:707px" width="9" height="9"><use href="#gmax"/></svg>
<div style="left:625px;top:705px;width:16px;height:14px;background:#d4d0c8;box-shadow:inset -1px -1px #404040,inset 1px 1px #fff,inset -2px -2px #808080,inset 2px 2px #d4d0c8;"></div>
<svg class="i" style="left:630px;top:709px" width="8" height="7"><use href="#gxw"/></svg>
<svg class="i" style="left:629px;top:708px" width="8" height="7"><use href="#gxd"/></svg>
<svg class="i" style="left:491px;top:704px" width="16" height="16"><path d="M3 3h10v12h-10z" fill="#fff" stroke="#000"/><path d="M4 1l9 0 0 4-11 0z" fill="#00a"/><path d="M4 2h8" stroke="#fff" stroke-dasharray="1 1"/><path d="M4 9h8v4h-8z" fill="#f00"/><path d="M4 11h8" stroke="#fff" stroke-dasharray="2 1"/></svg>
<div style="left:646px;top:704px;width:160px;height:24px;background:#d4d0c8;box-shadow:inset -1px -1px #404040,inset 1px 1px #d4d0c8,inset -2px -2px #808080,inset 2px 2px #fff;"></div>
<div style="left:649px;top:707px;width:154px;height:18px;background:linear-gradient(90deg,#808080,#c0c0c0 66%)"></div>
<span class="t" style="left:669px;top:710px;font-size:11px;line-height:13px;color:#d4d0c8;font-weight:bold;transform:scaleX(1.053);">Simple Regr...</span>
<div style="left:751px;top:709px;width:16px;height:14px;background:#d4d0c8;box-shadow:inset -1px -1px #404040,inset 1px 1px #fff,inset -2px -2px #808080,inset 2px 2px #d4d0c8;"></div>
<svg class="i" style="left:754px;top:711px" width="8" height="9"><use href="#gres"/></svg>
<div style="left:767px;top:709px;width:16px;height:14px;background:#d4d0c8;box-shadow:inset -1px -1px #404040,inset 1px 1px #fff,inset -2px -2px #808080,inset 2px 2px #d4d0c8;"></div>
<svg class="i" style="left:770px;top:711px" width="9" height="9"><use href="#gmax"/></svg>
<div style="left:785px;top:709px;width:16px;height:14px;background:#d4d0c8;box-shadow:inset -1px -1px #404040,inset 1px 1px #fff,inset -2px -2px #808080,inset 2px 2px #d4d0c8;"></div>
<svg class="i" style="left:789px;top:712px" width="8" height="7"><use href="#gx"/></svg>
<svg class="i" style="left:651px;top:708px" width="16" height="16"><rect width="16" height="16" fill="#f0f"/><rect x="1" y="1" width="6" height="6" fill="#fff"/><rect x="1" y="9" width="6" height="6" fill="#fff"/><rect x="8" y="1" width="7" height="6" fill="#00a"/><rect x="8" y="9" width="7" height="6" fill="#00a"/><path d="M2 4h4M2 12h4" stroke="#000"/><path d="M9 6l5-4" stroke="#0ff"/><path d="M10 14v-3M12 14v-4M13 14v-2" stroke="#0f0"/></svg>
<div style="left:0px;top:724px;width:1024px;height:1px;background:#d4d0c8"></div>
<div style="left:4px;top:725px;width:1020px;height:1px;background:#fff"></div>
<div style="left:0px;top:726px;width:1024px;height:16px;background:#d4d0c8"></div>
<div style="left:1px;top:724px;width:1px;height:17px;background:#fff"></div>
<span class="t" style="left:5.3px;top:730px;font-size:11px;line-height:13px;color:#000;transform:scaleX(0.962);">Ready</span>
<div style="left:954px;top:728px;width:26px;height:14px;box-shadow:inset -1px -1px #fff,inset 1px 1px #808080;"></div>
<div style="left:982px;top:728px;width:28px;height:14px;box-shadow:inset -1px -1px #fff,inset 1px 1px #808080;"></div>
<span class="t" style="left:983.6px;top:730px;font-size:11px;line-height:13px;color:#000;transform:scaleX(0.882);">NUM</span>
<svg class="i" style="left:1016px;top:729px" width="13" height="12"><path d="M12 0L0 12M12 4L4 12M12 8L8 12" stroke="#808080"/><path d="M12 1L1 12M12 5L5 12M12 9L9 12" stroke="#fff"/></svg>
<div style="left:0px;top:740px;width:1024px;height:28px;background:#d4d0c8"></div>
<div style="left:0px;top:741px;width:1024px;height:1px;background:#fff"></div>
<div style="left:2px;top:744px;width:54px;height:22px;background:#d4d0c8;box-shadow:inset -1px -1px #404040,inset 1px 1px #fff,inset -2px -2px #808080,inset 2px 2px #d4d0c8;"></div>
<svg class="i" style="left:5px;top:747px" width="18" height="16"><rect x="9" y="1" width="4" height="1" fill="#000"/><rect x="7" y="2" width="8" height="1" fill="#000"/><rect x="1" y="3" width="1" height="1" fill="#000"/><rect x="7" y="3" width="2" height="1" fill="#000"/><rect x="9" y="3" width="2" height="1" fill="#f00"/><rect x="11" y="3" width="2" height="1" fill="#000"/><rect x="13" y="3" width="2" height="1" fill="#0c0"/><rect x="15" y="3" width="2" height="1" fill="#000"/><rect x="3" y="4" width="2" height="1" fill="#000"/><rect x="6" y="4" width="3" height="1" fill="#000"/><rect x="9" y="4" width="2" height="1" fill="#f00"/><rect x="11" y="4" width="2" height="1" fill="#000"/><rect x="13" y="4" width="2" height="1" fill="#0c0"/><rect x="15" y="4" width="2" height="1" fill="#000"/><rect x="1" y="5" width="1" height="1" fill="#000"/><rect x="7" y="5" width="2" height="1" fill="#000"/><rect x="9" y="5" width="2" height="1" fill="#f00"/><rect x="11" y="5" width="2" height="1" fill="#000"/><rect x="13" y="5" width="2" height="1" fill="#0c0"/><rect x="15" y="5" width="2" height="1" fill="#000"/><rect x="1" y="6" width="1" height="1" fill="#f00"/><rect x="3" y="6" width="1" height="1" fill="#f00"/><rect x="5" y="6" width="2" height="1" fill="#f00"/><rect x="7" y="6" width="2" height="1" fill="#000"/><rect x="9" y="6" width="2" height="1" fill="#f00"/><rect x="11" y="6" width="2" height="1" fill="#000"/><rect x="13" y="6" width="2" height="1" fill="#0c0"/><rect x="15" y="6" width="2" height="1" fill="#000"/><rect x="3" y="7" width="4" height="1" fill="#f00"/><rect x="7" y="7" width="10" height="1" fill="#000"/><rect x="1" y="8" width="1" height="1" fill="#000"/><rect x="7" y="8" width="2" height="1" fill="#000"/><rect x="9" y="8" width="2" height="1" fill="#00f"/><rect x="11" y="8" width="2" height="1" fill="#000"/><rect x="13" y="8" width="2" height="1" fill="#ff0"/><rect x="15" y="8" width="2" height="1" fill="#000"/><rect x="1" y="9" width="1" height="1" fill="#00f"/><rect x="3" y="9" width="4" height="1" fill="#00f"/><rect x="7" y="9" width="2" height="1" fill="#000"/><rect x="9" y="9" width="2" height="1" fill="#00f"/><rect x="11" y="9" width="2" height="1" fill="#000"/><rect x="13" y="9" width="2" height="1" fill="#ff0"/><rect x="15" y="9" width="2" height="1" fill="#000"/><rect x="3" y="10" width="1" height="1" fill="#00f"/><rect x="5" y="10" width="2" height="1" fill="#00f"/><rect x="7" y="10" width="2" height="1" fill="#000"/><rect x="9" y="10" width="2" height="1" fill="#00f"/><rect x="11" y="10" width="2" height="1" fill="#000"/><rect x="13" y="10" width="2" height="1" fill="#ff0"/><rect x="15" y="10" width="2" height="1" fill="#000"/><rect x="1" y="11" width="1" height="1" fill="#000"/><rect x="7" y="11" width="2" height="1" fill="#000"/><rect x="9" y="11" width="2" height="1" fill="#00f"/><rect x="11" y="11" width="2" height="1" fill="#000"/><rect x="13" y="11" width="2" height="1" fill="#ff0"/><rect x="15" y="11" width="2" height="1" fill="#000"/><rect x="3" y="12" width="2" height="1" fill="#000"/><rect x="6" y="12" width="11" height="1" fill="#000"/><rect x="1" y="13" width="1" height="1" fill="#000"/><rect x="4" y="13" width="5" height="1" fill="#000"/><rect x="12" y="13" width="5" height="1" fill="#000"/><rect x="14" y="14" width="3" height="1" fill="#000"/></svg>
<span class="t" style="left:23.2px;top:749px;font-size:11px;line-height:13px;color:#000;font-weight:bold;transform:scaleX(1.088);">Пуск</span>
<div style="left:59px;top:744px;width:1px;height:22px;background:#808080"></div>
<div style="left:60px;top:744px;width:1px;height:22px;background:#fff"></div>
<div style="left:63px;top:746px;width:3px;height:18px;box-shadow:inset 1px 1px #fff,inset -1px -1px #808080;"></div>
<div style="left:70px;top:744px;width:103px;height:22px;background:#d4d0c8;box-shadow:inset -1px -1px #404040,inset 1px 1px #fff,inset -2px -2px #808080,inset 2px 2px #d4d0c8;"></div>
<svg class="i" style="left:74px;top:747px" width="16" height="16"><path d="M1 4l2-2h4l2 2h6v9h-14z" fill="#ffff9c" stroke="#808000"/><path d="M3 13l2-6h10l-1 6z" fill="#ffe0a0" stroke="#808000"/><path d="M2 14h13" stroke="#000"/></svg>
<span class="t" style="left:91.7px;top:749px;font-size:11px;line-height:13px;color:#000;transform:scaleX(0.976);">Задание</span>
<div style="left:176px;top:744px;width:103px;height:22px;background:#d4d0c8;box-shadow:inset -1px -1px #404040,inset 1px 1px #fff,inset -2px -2px #808080,inset 2px 2px #d4d0c8;"></div>
<svg class="i" style="left:180px;top:747px" width="16" height="16"><path d="M5 1h7l3 3v11h-10z" fill="#fff" stroke="#000" stroke-width="1"/><path d="M12 1v3h3" fill="none" stroke="#000"/><rect x="0" y="3" width="10" height="9" fill="#fff" stroke="#00a" stroke-width="1"/><path d="M2 5l1.500 5 1.500-4 1.500 4 1.500-5" stroke="#00a" stroke-width="1.500" fill="none"/></svg>
<span class="t" style="left:197.7px;top:749px;font-size:11px;line-height:13px;color:#000;transform:scaleX(1.043);">эконометрик...</span>
<div style="left:282px;top:744px;width:103px;height:22px;background:#fff;background-image:conic-gradient(#d4d0c8 25%,#fff 0 50%,#d4d0c8 0 75%,#fff 0);background-size:2px 2px;box-shadow:inset 1px 1px #404040,inset -1px -1px #fff,inset 2px 2px #808080,inset -2px -2px #d4d0c8;"></div>
<svg class="i" style="left:286px;top:748px" width="16" height="16"><rect width="16" height="16" fill="#0ff"/><path d="M0 1h16" stroke="#000" stroke-dasharray="1 1"/><path d="M2 14l9-10" stroke="#c00" stroke-width="3"/><path d="M8 2l1 4-2 3 3-2 3 0-3-2z" fill="#f00"/><path d="M3 15l10-9" stroke="#ff0"/></svg>
<span class="t" style="left:304px;top:750px;font-size:11px;line-height:13px;color:#000;font-weight:bold;transform:scaleX(1.008);">STATGRAPH...</span>
<div style="left:388px;top:744px;width:103px;height:22px;background:#d4d0c8;box-shadow:inset -1px -1px #404040,inset 1px 1px #fff,inset -2px -2px #808080,inset 2px 2px #d4d0c8;"></div>
<svg class="i" style="left:392px;top:747px" width="16" height="16"><path d="M5 1h7l3 3v11h-10z" fill="#fff" stroke="#000" stroke-width="1"/><path d="M12 1v3h3" fill="none" stroke="#000"/><rect x="0" y="3" width="10" height="9" fill="#fff" stroke="#00a" stroke-width="1"/><path d="M2 5l1.500 5 1.500-4 1.500 4 1.500-5" stroke="#00a" stroke-width="1.500" fill="none"/></svg>
<span class="t" style="left:409.7px;top:749px;font-size:11px;line-height:13px;color:#000;">Лаги Алмон -...</span>
<div style="left:494px;top:744px;width:103px;height:22px;background:#d4d0c8;box-shadow:inset -1px -1px #404040,inset 1px 1px #fff,inset -2px -2px #808080,inset 2px 2px #d4d0c8;"></div>
<svg class="i" style="left:498px;top:747px" width="16" height="16"><path d="M5 1h7l3 3v11h-10z" fill="#fff" stroke="#000" stroke-width="1"/><path d="M12 1v3h3" fill="none" stroke="#000"/><rect x="0" y="3" width="10" height="9" fill="#fff" stroke="#00a" stroke-width="1"/><path d="M2 5l1.500 5 1.500-4 1.500 4 1.500-5" stroke="#00a" stroke-width="1.500" fill="none"/></svg>
<span class="t" style="left:515.7px;top:749px;font-size:11px;line-height:13px;color:#000;transform:scaleX(1.008);">Ряды динами...</span>
<div style="left:600px;top:744px;width:103px;height:22px;background:#d4d0c8;box-shadow:inset -1px -1px #404040,inset 1px 1px #fff,inset -2px -2px #808080,inset 2px 2px #d4d0c8;"></div>
<svg class="i" style="left:604px;top:747px" width="16" height="16"><rect x="0.500" y="0.500" width="15" height="15" fill="#d4d0c8" stroke="#080" stroke-dasharray="1 1"/><rect x="1.500" y="1.500" width="13" height="13" fill="#9c9" stroke="#080"/><path d="M4 4l8 8M12 4l-8 8" stroke="#060" stroke-width="2.500"/></svg>
<span class="t" style="left:621.7px;top:749px;font-size:11px;line-height:13px;color:#000;transform:scaleX(1.019);">Microsoft Exc...</span>
<div style="left:706px;top:744px;width:103px;height:22px;background:#d4d0c8;box-shadow:inset -1px -1px #404040,inset 1px 1px #fff,inset -2px -2px #808080,inset 2px 2px #d4d0c8;"></div>
<svg class="i" style="left:710px;top:747px" width="16" height="16"><path d="M5 1h7l3 3v11h-10z" fill="#fff" stroke="#000" stroke-width="1"/><path d="M12 1v3h3" fill="none" stroke="#000"/><rect x="0" y="3" width="10" height="9" fill="#fff" stroke="#00a" stroke-width="1"/><path d="M2 5l1.500 5 1.500-4 1.500 4 1.500-5" stroke="#00a" stroke-width="1.500" fill="none"/></svg>
<span class="t" style="left:727.7px;top:749px;font-size:11px;line-height:13px;color:#000;transform:scaleX(1.027);">работа - Micr...</span>
<div style="left:820px;top:744px;width:202px;height:22px;box-shadow:inset -1px -1px #fff,inset 1px 1px #808080;"></div>
<svg class="i" style="left:823px;top:747px;shape-rendering:auto" width="16" height="16"><path d="M1 6h3l5-5v14l-5-5h-3z" fill="#ff0" stroke="#000" stroke-width="1"/><path d="M11 4l3-2M11 8h4M11 12l3 2" stroke="#808080"/></svg>
<div style="left:842px;top:747px;width:16px;height:16px;background:#000080"></div>
<div style="left:860px;top:747px;width:16px;height:16px;background:#000080"></div>
<span class="t" style="left:844px;top:749px;font-size:11px;line-height:13px;color:#fff;transform:scaleX(0.967);">Ru</span>
<span class="t" style="left:861px;top:749px;font-size:11px;line-height:13px;color:#fff;transform:scaleX(0.919);">RU</span>
<svg class="i" style="left:879px;top:747px" width="17" height="16"><rect x="1" y="1" width="8" height="7" fill="#088" stroke="#808080"/><rect x="0" y="9" width="10" height="3" fill="#d4d0c8" stroke="#404040"/><path d="M9 10l6 6M15 10l-6 6" stroke="#f00" stroke-width="2"/></svg>
<svg class="i" style="left:896px;top:747px;shape-rendering:auto" width="17" height="16"><path d="M5 1h7l1.500 2.500 2.500 1.500v6l-2.500 1.500-1.500 2.500h-7l-1.500-2.500-2.500-1.500v-6l2.500-1.500z" fill="#e00" stroke="#000" stroke-width="1.600"/><circle cx="8.500" cy="8" r="4.200" fill="#000"/><path d="M4 4l2 2M13 4l-2 2M4 12l2-2M13 12l-2-2" stroke="#000" stroke-width="1.500"/><path d="M6.300 5.500v3.500a2.200 2.200 0 0 0 4.400 0v-3.500" stroke="#ff0" stroke-width="1.800" fill="none"/></svg>
<svg class="i" style="left:914px;top:747px;shape-rendering:auto" width="15" height="16"><rect width="15" height="16" fill="#fff"/><path d="M1 1h3v14h-3zM4 9l7-8h4l-7 8 3 3-3 2z" fill="#f00"/><path d="M8 9l6 6v-5l-1 1-3-3z" fill="#000"/></svg>
<svg class="i" style="left:932px;top:747px;shape-rendering:auto" width="17" height="16"><g fill="#808080" stroke="#060" stroke-width="1.300"><ellipse cx="8.500" cy="3.500" rx="2.200" ry="3"/><ellipse cx="8.500" cy="12.500" rx="2.200" ry="3"/><ellipse cx="4" cy="5.500" rx="2.200" ry="3" transform="rotate(-55 4 5.500)"/><ellipse cx="13" cy="5.500" rx="2.200" ry="3" transform="rotate(55 13 5.500)"/><ellipse cx="13" cy="10.500" rx="2.200" ry="3" transform="rotate(-55 13 10.500)"/><ellipse cx="4" cy="10.500" rx="2.200" ry="3" transform="rotate(55 4 10.500)" fill="#e00" stroke="#000"/></g><circle cx="8.500" cy="8" r="1.800" fill="#ff0"/></svg>
<svg class="i" style="left:951px;top:747px;shape-rendering:auto" width="15" height="16"><circle cx="8" cy="9" r="6.500" fill="#09f"/><path d="M4 6c2-2 4 0 5 2s-2 4-4 5z" fill="#0c0"/><path d="M10 10c2-1 3 0 4 1l-2 3z" fill="#fc0"/><path d="M2 2l4 1-1 3-3-1z" fill="#c00"/><path d="M5 1l3 2-2 2z" fill="#ff0"/></svg>
<span class="t" style="left:981px;top:750px;font-size:11px;line-height:13px;color:#000;transform:scaleX(1.033);">11:15</span>
<div style="left:2px;top:1px;width:525px;height:452px;background:#d4d0c8;box-shadow:inset -1px -1px #404040,inset 1px 1px #d4d0c8,inset -2px -2px #808080,inset 2px 2px #fff;"></div>
<div style="left:5px;top:4px;width:519px;height:18px;background:linear-gradient(90deg,#0a246a,#a6caf0 97%)"></div>
<span class="t" style="left:6px;top:7px;font-size:11px;line-height:13px;color:#fff;font-weight:bold;transform:scaleX(1.045);">Model Specification Options</span>
<div style="left:506px;top:6px;width:16px;height:14px;background:#d4d0c8;box-shadow:inset -1px -1px #404040,inset 1px 1px #fff,inset -2px -2px #808080,inset 2px 2px #d4d0c8;"></div>
<svg class="i" style="left:510px;top:9px" width="8" height="7"><use href="#gx"/></svg>
<div style="left:14px;top:38px;width:52px;height:106px;border:1px solid #fff"></div>
<div style="left:13px;top:37px;width:52px;height:106px;border:1px solid #808080"></div>
<div style="left:20px;top:31px;height:13px;width:33px;background:#d4d0c8"></div>
<span class="t" style="left:22px;top:31px;font-size:12px;line-height:14px;color:#000;transform:scaleX(0.906);">Model</span>
<svg class="i" style="left:21px;top:57px" width="12" height="12"><use href="#rc"/></svg>
<span class="t" style="left:38px;top:57px;font-size:12px;line-height:14px;color:#000;transform:scaleX(0.885);">A</span>
<svg class="i" style="left:21px;top:73px" width="12" height="12"><use href="#ru"/></svg>
<span class="t" style="left:38px;top:73px;font-size:12px;line-height:14px;color:#000;transform:scaleX(0.885);">B</span>
<svg class="i" style="left:21px;top:89px" width="12" height="12"><use href="#ru"/></svg>
<span class="t" style="left:38px;top:89px;font-size:12px;line-height:14px;color:#000;transform:scaleX(0.885);">C</span>
<svg class="i" style="left:21px;top:105px" width="12" height="12"><use href="#ru"/></svg>
<span class="t" style="left:38px;top:105px;font-size:12px;line-height:14px;color:#000;transform:scaleX(0.885);">D</span>
<svg class="i" style="left:21px;top:122px" width="12" height="12"><use href="#ru"/></svg>
<span class="t" style="left:38px;top:122px;font-size:12px;line-height:14px;color:#000;transform:scaleX(0.885);">E</span>
<div style="left:74px;top:38px;width:217px;height:139px;border:1px solid #fff"></div>
<div style="left:73px;top:37px;width:217px;height:139px;border:1px solid #808080"></div>
<div style="left:80px;top:31px;height:13px;width:27.5px;background:#d4d0c8"></div>
<span class="t" style="left:82px;top:31px;font-size:12px;line-height:14px;color:#000;transform:scaleX(0.903);">Math</span>
<svg class="i" style="left:81px;top:57px" width="12" height="12"><use href="#rc"/></svg>
<span class="t" style="left:98px;top:57px;font-size:12px;line-height:14px;color:#000;transform:scaleX(0.910);">None</span>
<svg class="i" style="left:81px;top:79px" width="12" height="12"><use href="#ru"/></svg>
<span class="t" style="left:98px;top:79px;font-size:12px;line-height:14px;color:#000;transform:scaleX(0.889);">Natural log</span>
<svg class="i" style="left:81px;top:105px" width="12" height="12"><use href="#ru"/></svg>
<span class="t" style="left:98px;top:105px;font-size:12px;line-height:14px;color:#000;transform:scaleX(0.893);">Base 10 log</span>
<svg class="i" style="left:81px;top:130px" width="12" height="12"><use href="#ru"/></svg>
<span class="t" style="left:98px;top:130px;font-size:12px;line-height:14px;color:#000;transform:scaleX(0.879);">Square root</span>
<svg class="i" style="left:81px;top:154px" width="12" height="12"><use href="#ru"/></svg>
<span class="t" style="left:98px;top:154px;font-size:12px;line-height:14px;color:#000;transform:scaleX(0.910);">Reciprocal</span>
<svg class="i" style="left:164px;top:57px" width="12" height="12"><use href="#ru"/></svg>
<span class="t" style="left:181px;top:57px;font-size:12px;line-height:14px;color:#000;transform:scaleX(0.873);">Power:</span>
<svg class="i" style="left:164px;top:104px" width="12" height="12"><use href="#ru"/></svg>
<span class="t" style="left:181px;top:104px;font-size:12px;line-height:14px;color:#000;transform:scaleX(0.861);">Box-Cox</span>
<div style="left:185px;top:80px;width:60px;height:21px;background:#d4d0c8;box-shadow:inset -1px -1px #fff,inset 1px 1px #808080,inset -2px -2px #d4d0c8,inset 2px 2px #404040;"></div>
<span class="t" style="left:189px;top:83px;font-size:12px;line-height:14px;color:#808080;transform:scaleX(0.885);">1,0</span>
<span class="t" style="left:185px;top:124px;font-size:12px;line-height:14px;color:#000;transform:scaleX(0.873);">Power:</span>
<div style="left:230px;top:121px;width:53px;height:21px;background:#d4d0c8;box-shadow:inset -1px -1px #fff,inset 1px 1px #808080,inset -2px -2px #d4d0c8,inset 2px 2px #404040;"></div>
<span class="t" style="left:234px;top:124px;font-size:12px;line-height:14px;color:#808080;transform:scaleX(0.885);">1,0</span>
<span class="t" style="left:185px;top:153px;font-size:12px;line-height:14px;color:#000;transform:scaleX(0.886);">Addend:</span>
<div style="left:230px;top:150px;width:53px;height:21px;background:#d4d0c8;box-shadow:inset -1px -1px #fff,inset 1px 1px #808080,inset -2px -2px #d4d0c8,inset 2px 2px #404040;"></div>
<span class="t" style="left:234px;top:153px;font-size:12px;line-height:14px;color:#808080;transform:scaleX(0.885);">0,0</span>
<div style="left:299px;top:38px;width:128px;height:115px;border:1px solid #fff"></div>
<div style="left:298px;top:37px;width:128px;height:115px;border:1px solid #808080"></div>
<div style="left:305px;top:31px;height:13px;width:41px;background:#d4d0c8"></div>
<span class="t" style="left:307px;top:31px;font-size:12px;line-height:14px;color:#000;transform:scaleX(0.895);">Inflation</span>
<span class="t" style="left:310px;top:56px;font-size:12px;line-height:14px;color:#000;transform:scaleX(0.880);">Apply at:</span>
<svg class="i" style="left:311px;top:73px" width="12" height="12"><use href="#rc"/></svg>
<span class="t" style="left:328px;top:73px;font-size:12px;line-height:14px;color:#000;transform:scaleX(0.895);">End of Period</span>
<svg class="i" style="left:311px;top:97px" width="12" height="12"><use href="#ru"/></svg>
<span class="t" style="left:328px;top:97px;font-size:12px;line-height:14px;color:#000;transform:scaleX(0.889);">Middle of Period</span>
<span class="t" style="left:310px;top:125px;font-size:12px;line-height:14px;color:#000;transform:scaleX(0.892);">Rate:</span>
<div style="left:343px;top:121px;width:38px;height:21px;background:#fff;box-shadow:inset -1px -1px #fff,inset 1px 1px #808080,inset -2px -2px #d4d0c8,inset 2px 2px #404040;"></div>
<span class="t" style="left:347px;top:124px;font-size:12px;line-height:14px;color:#000;transform:scaleX(0.885);">0,</span>
<span class="t" style="left:381px;top:129px;font-size:12px;line-height:14px;color:#000;transform:scaleX(0.759);">%</span>
<div style="left:433px;top:31px;width:83px;height:23px;background:#000"></div>
<div style="left:434px;top:32px;width:81px;height:21px;background:#d4d0c8;box-shadow:inset -1px -1px #404040,inset 1px 1px #fff,inset -2px -2px #808080,inset 2px 2px #d4d0c8;"></div>
<div class="bl" style="left:433px;top:31px;width:83px;height:23px;line-height:23px;color:#000;"><span style="display:inline-block;transform:scaleX(0.885)">OK</span></div>
<div style="left:433px;top:59px;width:83px;height:23px;background:#d4d0c8;box-shadow:inset -1px -1px #404040,inset 1px 1px #fff,inset -2px -2px #808080,inset 2px 2px #d4d0c8;"></div>
<div class="bl" style="left:433px;top:59px;width:83px;height:23px;line-height:23px;color:#000;"><span style="display:inline-block;transform:scaleX(0.885)">Cancel</span></div>
<div style="left:433px;top:90px;width:83px;height:23px;background:#d4d0c8;box-shadow:inset -1px -1px #404040,inset 1px 1px #fff,inset -2px -2px #808080,inset 2px 2px #d4d0c8;"></div>
<div class="bl" style="left:433px;top:90px;width:83px;height:23px;line-height:23px;color:#808080;text-shadow:1px 1px 0 #fff;"><span style="display:inline-block;transform:scaleX(0.862)">Estimation...</span></div>
<div style="left:433px;top:119px;width:83px;height:23px;background:#d4d0c8;box-shadow:inset -1px -1px #404040,inset 1px 1px #fff,inset -2px -2px #808080,inset 2px 2px #d4d0c8;"></div>
<div class="bl" style="left:433px;top:119px;width:83px;height:23px;line-height:23px;color:#000;"><span style="display:inline-block;transform:scaleX(0.885)">Regression...</span></div>
<div style="left:433px;top:151px;width:83px;height:23px;background:#d4d0c8;box-shadow:inset -1px -1px #404040,inset 1px 1px #fff,inset -2px -2px #808080,inset 2px 2px #d4d0c8;"></div>
<div class="bl" style="left:433px;top:151px;width:83px;height:23px;line-height:23px;color:#000;"><span style="display:inline-block;transform:scaleX(0.885)">Help</span></div>
<div style="left:14px;top:184px;width:292px;height:180px;border:1px solid #fff"></div>
<div style="left:13px;top:183px;width:292px;height:180px;border:1px solid #808080"></div>
<div style="left:20px;top:177px;height:13px;width:27.5px;background:#d4d0c8"></div>
<span class="t" style="left:22px;top:177px;font-size:12px;line-height:14px;color:#000;transform:scaleX(0.926);">Type</span>
<svg class="i" style="left:21px;top:198px" width="12" height="12"><use href="#ru"/></svg>
<span class="t" style="left:38px;top:198px;font-size:12px;line-height:14px;color:#000;transform:scaleX(0.910);">None</span>
<svg class="i" style="left:21px;top:219px" width="12" height="12"><use href="#ru"/></svg>
<span class="t" style="left:38px;top:219px;font-size:12px;line-height:14px;color:#000;transform:scaleX(0.909);">Random Walk</span>
<svg class="i" style="left:21px;top:242px" width="12" height="12"><use href="#ru"/></svg>
<span class="t" style="left:38px;top:242px;font-size:12px;line-height:14px;color:#000;transform:scaleX(0.919);">Mean</span>
<svg class="i" style="left:21px;top:266px" width="12" height="12"><use href="#rc"/></svg>
<span class="t" style="left:38px;top:266px;font-size:12px;line-height:14px;color:#000;transform:scaleX(0.899);">Linear Trend</span>
<svg class="i" style="left:21px;top:291px" width="12" height="12"><use href="#ru"/></svg>
<span class="t" style="left:38px;top:291px;font-size:12px;line-height:14px;color:#000;transform:scaleX(0.902);">Quadratic Trend</span>
<svg class="i" style="left:21px;top:315px" width="12" height="12"><use href="#ru"/></svg>
<span class="t" style="left:38px;top:315px;font-size:12px;line-height:14px;color:#000;transform:scaleX(0.890);">Exponential Trend</span>
<svg class="i" style="left:21px;top:339px" width="12" height="12"><use href="#ru"/></svg>
<span class="t" style="left:38px;top:339px;font-size:12px;line-height:14px;color:#000;transform:scaleX(0.866);">S-Curve</span>
<svg class="i" style="left:134px;top:198px" width="12" height="12"><use href="#ru"/></svg>
<span class="t" style="left:151px;top:198px;font-size:12px;line-height:14px;color:#000;transform:scaleX(0.916);">Moving Average</span>
<svg class="i" style="left:134px;top:219px" width="12" height="12"><use href="#ru"/></svg>
<span class="t" style="left:151px;top:219px;font-size:12px;line-height:14px;color:#000;transform:scaleX(0.879);">Simple Exp. Smoothing</span>
<svg class="i" style="left:134px;top:242px" width="12" height="12"><use href="#ru"/></svg>
<span class="t" style="left:151px;top:242px;font-size:12px;line-height:14px;color:#000;transform:scaleX(0.881);">Brown&#x27;s Linear Exp. Smoothing</span>
<svg class="i" style="left:134px;top:266px" width="12" height="12"><use href="#ru"/></svg>
<span class="t" style="left:151px;top:266px;font-size:12px;line-height:14px;color:#000;transform:scaleX(0.878);">Holt&#x27;s Linear Exp. Smoothing</span>
<svg class="i" style="left:134px;top:291px" width="12" height="12"><use href="#ru"/></svg>
<span class="t" style="left:151px;top:291px;font-size:12px;line-height:14px;color:#000;transform:scaleX(0.882);">Quadratic Exp. Smoothing</span>
<svg class="i" style="left:134px;top:315px" width="12" height="12"><use href="#rud"/></svg>
<span class="t" style="left:151px;top:315px;font-size:12px;line-height:14px;color:#808080;transform:scaleX(0.879);text-shadow:1px 1px 0 #fff;">Winter&#x27;s Exp. Smoothing</span>
<svg class="i" style="left:134px;top:339px" width="12" height="12"><use href="#ru"/></svg>
<span class="t" style="left:151px;top:339px;font-size:12px;line-height:14px;color:#000;transform:scaleX(0.915);">ARIMA Model</span>
<div style="left:314px;top:184px;width:202px;height:180px;border:1px solid #fff"></div>
<div style="left:313px;top:183px;width:202px;height:180px;border:1px solid #808080"></div>
<div style="left:320px;top:177px;height:13px;width:109.5px;background:#d4d0c8"></div>
<span class="t" style="left:322px;top:177px;font-size:12px;line-height:14px;color:#808080;transform:scaleX(0.876);text-shadow:1px 1px 0 #fff;">Parameters and Terms</span>
<span class="t" style="left:322px;top:202px;font-size:12px;line-height:14px;color:#808080;transform:scaleX(0.884);text-shadow:1px 1px 0 #fff;">Alpha:</span>
<div style="left:322px;top:216px;width:48px;height:21px;background:#d4d0c8;box-shadow:inset -1px -1px #fff,inset 1px 1px #808080,inset -2px -2px #d4d0c8,inset 2px 2px #404040;"></div>
<span class="t" style="left:326px;top:219px;font-size:12px;line-height:14px;color:#808080;transform:scaleX(0.885);">0,1</span>
<span class="t" style="left:388px;top:202px;font-size:12px;line-height:14px;color:#808080;transform:scaleX(0.855);text-shadow:1px 1px 0 #fff;">Order:</span>
<div style="left:388px;top:220px;width:48px;height:21px;background:#d4d0c8;box-shadow:inset -1px -1px #fff,inset 1px 1px #808080,inset -2px -2px #d4d0c8,inset 2px 2px #404040;"></div>
<span class="t" style="left:392px;top:223px;font-size:12px;line-height:14px;color:#808080;transform:scaleX(0.885);">5</span>
<span class="t" style="left:322px;top:242px;font-size:12px;line-height:14px;color:#808080;transform:scaleX(0.895);text-shadow:1px 1px 0 #fff;">Beta:</span>
<div style="left:322px;top:259px;width:48px;height:21px;background:#d4d0c8;box-shadow:inset -1px -1px #fff,inset 1px 1px #808080,inset -2px -2px #d4d0c8,inset 2px 2px #404040;"></div>
<span class="t" style="left:326px;top:262px;font-size:12px;line-height:14px;color:#808080;transform:scaleX(0.885);">0,1</span>
<span class="t" style="left:388px;top:242px;font-size:12px;line-height:14px;color:#808080;transform:scaleX(0.879);text-shadow:1px 1px 0 #fff;">AR:</span>
<div style="left:388px;top:259px;width:48px;height:21px;background:#d4d0c8;box-shadow:inset -1px -1px #fff,inset 1px 1px #808080,inset -2px -2px #d4d0c8,inset 2px 2px #404040;"></div>
<span class="t" style="left:392px;top:262px;font-size:12px;line-height:14px;color:#808080;transform:scaleX(0.885);">1</span>
<span class="t" style="left:455px;top:242px;font-size:12px;line-height:14px;color:#808080;transform:scaleX(0.895);text-shadow:1px 1px 0 #fff;">MA:</span>
<div style="left:455px;top:259px;width:48px;height:21px;background:#d4d0c8;box-shadow:inset -1px -1px #fff,inset 1px 1px #808080,inset -2px -2px #d4d0c8,inset 2px 2px #404040;"></div>
<span class="t" style="left:459px;top:262px;font-size:12px;line-height:14px;color:#808080;transform:scaleX(0.885);">0</span>
<span class="t" style="left:322px;top:281px;font-size:12px;line-height:14px;color:#808080;transform:scaleX(0.850);text-shadow:1px 1px 0 #fff;">Gamma:</span>
<div style="left:322px;top:298px;width:48px;height:21px;background:#d4d0c8;box-shadow:inset -1px -1px #fff,inset 1px 1px #808080,inset -2px -2px #d4d0c8,inset 2px 2px #404040;"></div>
<span class="t" style="left:326px;top:301px;font-size:12px;line-height:14px;color:#808080;transform:scaleX(0.885);">0,1</span>
<span class="t" style="left:388px;top:281px;font-size:12px;line-height:14px;color:#808080;transform:scaleX(0.878);text-shadow:1px 1px 0 #fff;">SAR:</span>
<div style="left:388px;top:298px;width:48px;height:21px;background:#d4d0c8;box-shadow:inset -1px -1px #fff,inset 1px 1px #808080,inset -2px -2px #d4d0c8,inset 2px 2px #404040;"></div>
<span class="t" style="left:392px;top:301px;font-size:12px;line-height:14px;color:#808080;transform:scaleX(0.885);">0</span>
<span class="t" style="left:455px;top:281px;font-size:12px;line-height:14px;color:#808080;transform:scaleX(0.872);text-shadow:1px 1px 0 #fff;">SMA:</span>
<div style="left:455px;top:298px;width:48px;height:21px;background:#d4d0c8;box-shadow:inset -1px -1px #fff,inset 1px 1px #808080,inset -2px -2px #d4d0c8,inset 2px 2px #404040;"></div>
<span class="t" style="left:459px;top:301px;font-size:12px;line-height:14px;color:#808080;transform:scaleX(0.885);">0</span>
<svg class="i" style="left:322px;top:326px" width="13" height="13"><use href="#ckd"/></svg>
<span class="t" style="left:341px;top:326px;font-size:12px;line-height:14px;color:#808080;transform:scaleX(0.868);text-shadow:1px 1px 0 #fff;">Optimize</span>
<svg class="i" style="left:322px;top:343px" width="13" height="13"><use href="#ckd"/></svg>
<span class="t" style="left:341px;top:343px;font-size:12px;line-height:14px;color:#808080;transform:scaleX(0.897);text-shadow:1px 1px 0 #fff;">Constant</span>
<div style="left:14px;top:371px;width:97px;height:74px;border:1px solid #fff"></div>
<div style="left:13px;top:370px;width:97px;height:74px;border:1px solid #808080"></div>
<div style="left:20px;top:364px;height:13px;width:47px;background:#d4d0c8"></div>
<span class="t" style="left:22px;top:364px;font-size:12px;line-height:14px;color:#808080;transform:scaleX(0.871);text-shadow:1px 1px 0 #fff;">Seasonal</span>
<svg class="i" style="left:21px;top:382px" width="12" height="12"><use href="#rcd"/></svg>
<span class="t" style="left:38px;top:382px;font-size:12px;line-height:14px;color:#808080;transform:scaleX(0.927);text-shadow:1px 1px 0 #fff;">None</span>
<svg class="i" style="left:21px;top:403px" width="12" height="12"><use href="#rud"/></svg>
<span class="t" style="left:38px;top:403px;font-size:12px;line-height:14px;color:#808080;transform:scaleX(0.897);text-shadow:1px 1px 0 #fff;">Multiplicative</span>
<svg class="i" style="left:21px;top:424px" width="12" height="12"><use href="#rud"/></svg>
<span class="t" style="left:38px;top:424px;font-size:12px;line-height:14px;color:#808080;transform:scaleX(0.904);text-shadow:1px 1px 0 #fff;">Additive</span>
<div style="left:119px;top:371px;width:277px;height:74px;border:1px solid #fff"></div>
<div style="left:118px;top:370px;width:277px;height:74px;border:1px solid #808080"></div>
<div style="left:125px;top:364px;height:13px;width:60px;background:#d4d0c8"></div>
<span class="t" style="left:127px;top:364px;font-size:12px;line-height:14px;color:#808080;transform:scaleX(0.887);text-shadow:1px 1px 0 #fff;">Differencing</span>
<span class="t" style="left:128px;top:394px;font-size:12px;line-height:14px;color:#808080;transform:scaleX(0.872);text-shadow:1px 1px 0 #fff;">Nonseasonal Order:</span>
<div style="left:128px;top:410px;width:60px;height:21px;background:#d4d0c8;box-shadow:inset -1px -1px #fff,inset 1px 1px #808080,inset -2px -2px #d4d0c8,inset 2px 2px #404040;"></div>
<span class="t" style="left:132px;top:413px;font-size:12px;line-height:14px;color:#808080;transform:scaleX(0.885);">0</span>
<span class="t" style="left:254px;top:394px;font-size:12px;line-height:14px;color:#808080;transform:scaleX(0.871);text-shadow:1px 1px 0 #fff;">Seasonal Order:</span>
<div style="left:254px;top:410px;width:60px;height:21px;background:#d4d0c8;box-shadow:inset -1px -1px #fff,inset 1px 1px #808080,inset -2px -2px #d4d0c8,inset 2px 2px #404040;"></div>
<span class="t" style="left:258px;top:413px;font-size:12px;line-height:14px;color:#808080;transform:scaleX(0.885);">0</span>
</div>
</body></html>
